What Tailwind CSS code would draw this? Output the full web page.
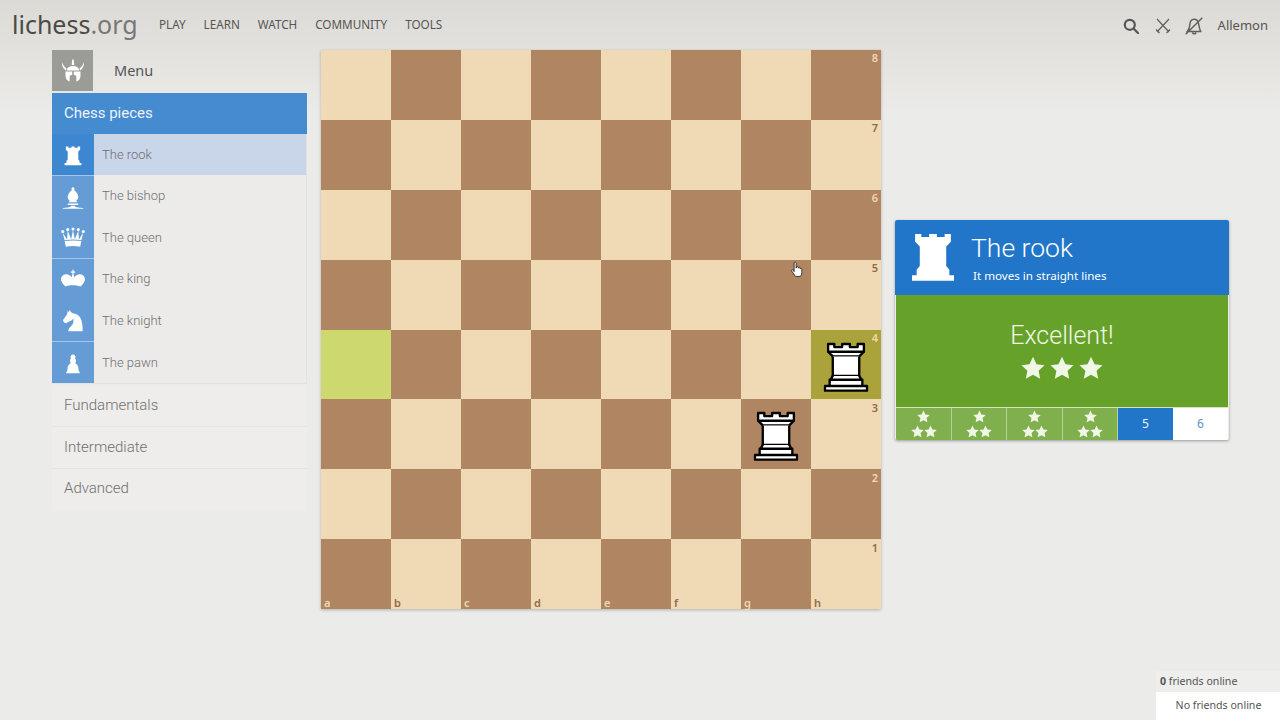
<!DOCTYPE html>
<html lang="en">
  <head>
    <meta charset="UTF-8" />
    <title>lichess.org</title>
    <script src="https://cdn.jsdelivr.net/npm/@tailwindcss/browser@4"></script>
  </head>
  <body class="relative w-[1280px] h-[720px] overflow-hidden bg-[linear-gradient(#dcdad5,#ebebe9_116px)] font-['Noto_Sans',sans-serif]">
    <svg class="hidden">
      <defs>
        <symbol id="rook-w" viewBox="0 0 45 45"><g fill="#fff" fill-rule="evenodd" stroke="#000" stroke-width="1.5" stroke-linecap="round" stroke-linejoin="round"><path d="M9 39h27v-3H9v3zM12 36v-4h21v4H12zM11 14V9h4v2h5V9h5v2h5V9h4v5" stroke-linecap="butt"/><path d="M34 14l-3 3H14l-3-3"/><path d="M31 17v12.500H14V17" stroke-linecap="butt" stroke-linejoin="miter"/><path d="M31 29.500l1.500 2.500h-20l1.500-2.500"/><path d="M11 14h23" fill="none" stroke-linejoin="miter"/></g></symbol>
        <symbol id="rook" viewBox="0 0 45 45"><path fill="#fff" d="M9 39v-3.500h3V32l2-2.500V17l-3-3V9h4v2h5V9h5v2h5V9h4v5l-3 3v12.500l2 2.500v3.500h3V39z"/></symbol>
        <symbol id="bishop" viewBox="0 0 45 45"><path fill="#fff" d="M22.500 7a2.500 2.500 0 0 1 1.700 4.300C28 14 31 19 31 23c0 2.500-1.500 4-3 5l1 3H16l1-3c-1.500-1-3-2.500-3-5 0-4 3-9 6.800-11.700A2.500 2.500 0 0 1 22.500 7zM14 33h17v2.500H14zM6 40c5 0 12-.5 14-3.500h5c2 3 9 3.500 14 3.500v1.500H6z"/></symbol>
        <symbol id="queen" viewBox="0 0 45 45"><g fill="#fff"><circle cx="6" cy="12" r="2.500"/><circle cx="14" cy="9" r="2.500"/><circle cx="22.500" cy="8" r="2.500"/><circle cx="31" cy="9" r="2.500"/><circle cx="39" cy="12" r="2.500"/><path d="M9 26c8.500-1.500 18.500-1.500 27 0l3-12-7 11-1-14-5.500 13.500L22.500 10l-3 14.500L14 11l-1 14-7-11zM9 27.500c8-1.500 19-1.500 27 0l-2 9c-7-1.500-16-1.500-23 0z"/></g></symbol>
        <symbol id="king" viewBox="0 0 45 45"><path fill="#fff" d="M21.500 6h2v3h2.500v2h-2.500v3.500c1 .5 1 2.500 0 6 1-4 6-8 12-7 5 1 7 6 6 10-1 3.500-4 7-7 9.500-7-2.500-18-2.500-24 0-3-2.500-6-6-7-9.500-1-4 1-9 6-10 6-1 11 3 12 7-1-3.500-1-5.500 0-6V11H19V9h2.500z"/></symbol>
        <symbol id="knight" viewBox="0 0 45 45"><path fill="#fff" d="M22 10c10.500 1 16.500 8 16 29H15c0-9 10-6.500 8-21 0 0-1.500 4-6 5-3 .5-3 3-5.500 3-2 0-3-1-5-3.500-.5-2.500 3-5 6-10 1.500-2.500 1-4 1-5.500l2 .5 1.500-2.500L20 9z"/></symbol>
        <symbol id="pawn" viewBox="0 0 45 45"><path fill="#fff" d="M22.500 9a4 4 0 0 0-3.200 6.400A5 5 0 0 0 17.500 19c0 1.500.7 2.800 1.800 3.700-2.300.8-5.800 4.300-5.800 10.300v1.500L11 39h23l-2.500-4.500V33c0-6-3.500-9.500-5.800-10.300a5 5 0 0 0 1.800-3.700 5 5 0 0 0-1.800-3.600A4 4 0 0 0 22.500 9z"/></symbol>
        <symbol id="star" viewBox="0 0 24 24"><path d="M12 .8l3.500 7.500 8 1-5.900 5.500 1.600 8L12 18.800l-7.200 4 1.600-8L.5 9.300l8-1z"/></symbol>
      </defs>
    </svg>

    <header class="h-[50px] flex items-center">
      <a class="ml-3 w-[147px] text-[25px] leading-none -mt-[2px] text-[#4a4a48]">lichess<span class="text-[#777]">.org</span></a>
      <nav class="flex gap-[18px] text-[11.700px] text-[#555] uppercase">
        <span>Play</span><span>Learn</span><span>Watch</span><span>Community</span><span>Tools</span>
      </nav>
      <div class="ml-auto flex items-center pr-3 text-[#555]">
        <svg class="w-[16px] h-[16px] mr-[16px] mt-[2px]" viewBox="0 0 16 16" fill="none" stroke="#555" stroke-width="2.200"><circle cx="6.800" cy="6.800" r="5"/><path d="M10.500 10.500L15 15" stroke-linecap="round"/></svg>
        <svg class="w-[16px] h-[16px] mr-[13px] mt-[2px]" viewBox="0 0 16 16" fill="none" stroke="#5f5f5d" stroke-width="1.200"><path d="M2 1l12 13M14 1L2 14M1 11.500l3.500 3.500M15 11.500L11.500 15"/></svg>
        <svg class="w-[20px] h-[20px] mr-[14px] mt-[1px]" viewBox="0 0 18 18" fill="none" stroke="#5f5f5d" stroke-width="1.300"><path d="M3 14c1.500-1.500 2-3 2.200-6C5.500 4.500 7 3 9 3s3.500 1.200 4 3.500c.5 3 1 5.500 2 7.500zM7.500 15a2 2 0 0 0 3.500 0M1.500 16.500L16.500 1.500"/></svg>
        <span class="text-[13px] mt-px">Allemon</span>
      </div>
    </header>

    <main class="flex items-start">
      <aside class="ml-[52px] w-[255px] font-['Roboto',sans-serif]">
        <div class="flex items-center h-[41px] mb-[2px]">
          <div class="w-[41px] h-[41px] bg-[#9b9b97] flex items-center justify-center">
            <svg class="w-[26px] h-[26px]" viewBox="0 0 26 26" fill="#fff"><path d="M12.300 1.500h1.400l.6 5.500h-2.600zM1.800 4c.2 3.500 1 6 3.700 8.500l1-2.300C4.500 9 3 7 1.800 4zM24.200 4c-.2 3.500-1 6-3.700 8.500l-1-2.300C21.500 9 23 7 24.200 4zM6.500 12.500C7 9.500 9.500 8 13 8s6 1.500 6.500 4.500z"/><path d="M5.500 13.500h6.700v3.300l-2.500 1v5.700C7.300 23 5.700 21 5.500 18zM13.800 13.500h6.700V18c-.2 3-1.800 5-4.200 5.500v-5.700l-2.500-1z"/></svg>
          </div>
          <span class="ml-[21px] text-[14.500px] text-[#555] font-['Noto_Sans',sans-serif]">Menu</span>
        </div>
        <div class="h-[41px] flex items-center pl-[12px] bg-[#458bd0] text-[#eef4fb] text-[15px]">Chess pieces</div>
        <div class="border-r border-b border-[#e2e2df] text-[13px] font-light text-[#707070]">
          <div class="flex h-[41px] bg-[#c9d5e8]">
            <div class="w-[42px] bg-[#3d86d0] flex items-center justify-center"><svg class="w-[28px] h-[28px]"><use href="#rook"/></svg></div>
            <span class="self-center ml-[8px]">The rook</span>
          </div>
          <div class="flex h-[42px] bg-[#ecebe9]">
            <div class="w-[42px] bg-[#659cd5] border-t border-[#a6c5e6] flex items-center justify-center"><svg class="w-[28px] h-[28px]"><use href="#bishop"/></svg></div>
            <span class="self-center ml-[8px]">The bishop</span>
          </div>
          <div class="flex h-[41px] bg-[#ecebe9]">
            <div class="w-[42px] bg-[#659cd5] flex items-center justify-center"><svg class="w-[28px] h-[28px]"><use href="#queen"/></svg></div>
            <span class="self-center ml-[8px]">The queen</span>
          </div>
          <div class="flex h-[42px] bg-[#ecebe9]">
            <div class="w-[42px] bg-[#659cd5] border-t border-[#a6c5e6] flex items-center justify-center"><svg class="w-[28px] h-[28px]"><use href="#king"/></svg></div>
            <span class="self-center ml-[8px]">The king</span>
          </div>
          <div class="flex h-[41px] bg-[#ecebe9]">
            <div class="w-[42px] bg-[#659cd5] flex items-center justify-center"><svg class="w-[28px] h-[28px]"><use href="#knight"/></svg></div>
            <span class="self-center ml-[8px]">The knight</span>
          </div>
          <div class="flex h-[42px] bg-[#ecebe9]">
            <div class="w-[42px] bg-[#659cd5] border-t border-[#a6c5e6] flex items-center justify-center"><svg class="w-[28px] h-[28px]"><use href="#pawn"/></svg></div>
            <span class="self-center ml-[8px] pt-px">The pawn</span>
          </div>
        </div>
        <div class="text-[15px] font-light text-[#707070] bg-[#eeedeb] mt-[1px] pb-[4px]">
          <div class="h-[42px] flex items-center pl-[12px] border-b border-[#e4e4e1]">Fundamentals</div>
          <div class="h-[42px] flex items-center pl-[12px] border-b border-[#e4e4e1]">Intermediate</div>
          <div class="h-[38px] flex items-center pl-[12px]">Advanced</div>
        </div>
      </aside>

      <section class="ml-[14px] w-[560px] h-[559px] grid grid-cols-8 grid-rows-[70px_70px_70px_70px_69px_70px_70px_70px] shadow-[0_1px_3px_rgba(0,0,0,0.25)] text-[11px] font-semibold">
        <div class="bg-[#f0d9b5]"></div><div class="bg-[#af8661]"></div><div class="bg-[#f0d9b5]"></div><div class="bg-[#af8661]"></div><div class="bg-[#f0d9b5]"></div><div class="bg-[#af8661]"></div><div class="bg-[#f0d9b5]"></div><div class="bg-[#af8661] text-right pr-[3px] leading-[16px] text-[#f0d9b5]">8</div>
        <div class="bg-[#af8661]"></div><div class="bg-[#f0d9b5]"></div><div class="bg-[#af8661]"></div><div class="bg-[#f0d9b5]"></div><div class="bg-[#af8661]"></div><div class="bg-[#f0d9b5]"></div><div class="bg-[#af8661]"></div><div class="bg-[#f0d9b5] text-right pr-[3px] leading-[16px] text-[#8f6c4c]">7</div>
        <div class="bg-[#f0d9b5]"></div><div class="bg-[#af8661]"></div><div class="bg-[#f0d9b5]"></div><div class="bg-[#af8661]"></div><div class="bg-[#f0d9b5]"></div><div class="bg-[#af8661]"></div><div class="bg-[#f0d9b5]"></div><div class="bg-[#af8661] text-right pr-[3px] leading-[16px] text-[#f0d9b5]">6</div>
        <div class="bg-[#af8661]"></div><div class="bg-[#f0d9b5]"></div><div class="bg-[#af8661]"></div><div class="bg-[#f0d9b5]"></div><div class="bg-[#af8661]"></div><div class="bg-[#f0d9b5]"></div><div class="bg-[#af8661]"></div><div class="bg-[#f0d9b5] text-right pr-[3px] leading-[16px] text-[#8f6c4c]">5</div>
        <div class="bg-[#cdd96f]"></div><div class="bg-[#af8661]"></div><div class="bg-[#f0d9b5]"></div><div class="bg-[#af8661]"></div><div class="bg-[#f0d9b5]"></div><div class="bg-[#af8661]"></div><div class="bg-[#f0d9b5]"></div><div class="relative bg-[#aaa23a] text-right pr-[3px] leading-[16px] text-[#f0d9b5]">4<svg class="absolute inset-0 w-[70px] h-[70px]"><use href="#rook-w"/></svg></div>
        <div class="bg-[#af8661]"></div><div class="bg-[#f0d9b5]"></div><div class="bg-[#af8661]"></div><div class="bg-[#f0d9b5]"></div><div class="bg-[#af8661]"></div><div class="bg-[#f0d9b5]"></div><div class="relative bg-[#af8661]"><svg class="absolute inset-0 w-[70px] h-[70px]"><use href="#rook-w"/></svg></div><div class="bg-[#f0d9b5] text-right pr-[3px] pt-px leading-[16px] text-[#8f6c4c]">3</div>
        <div class="bg-[#f0d9b5]"></div><div class="bg-[#af8661]"></div><div class="bg-[#f0d9b5]"></div><div class="bg-[#af8661]"></div><div class="bg-[#f0d9b5]"></div><div class="bg-[#af8661]"></div><div class="bg-[#f0d9b5]"></div><div class="bg-[#af8661] text-right pr-[3px] pt-px leading-[16px] text-[#f0d9b5]">2</div>
        <div class="relative bg-[#af8661] text-[#f0d9b5]"><span class="absolute left-[3px] bottom-0 leading-[12px]">a</span></div>
        <div class="relative bg-[#f0d9b5] text-[#8f6c4c]"><span class="absolute left-[3px] bottom-0 leading-[12px]">b</span></div>
        <div class="relative bg-[#af8661] text-[#f0d9b5]"><span class="absolute left-[3px] bottom-0 leading-[12px]">c</span></div>
        <div class="relative bg-[#f0d9b5] text-[#8f6c4c]"><span class="absolute left-[3px] bottom-0 leading-[12px]">d</span></div>
        <div class="relative bg-[#af8661] text-[#f0d9b5]"><span class="absolute left-[3px] bottom-0 leading-[12px]">e</span></div>
        <div class="relative bg-[#f0d9b5] text-[#8f6c4c]"><span class="absolute left-[3px] bottom-0 leading-[12px]">f</span></div>
        <div class="relative bg-[#af8661] text-[#f0d9b5]"><span class="absolute left-[3px] bottom-0 leading-[12px]">g</span></div>
        <div class="relative bg-[#f0d9b5] text-[#8f6c4c] text-right pr-[3px] pt-px leading-[16px]">1<span class="absolute left-[3px] bottom-0 leading-[12px]">h</span></div>
      </section>

      <section class="ml-[14px] mt-[170px] w-[334px] rounded-[2px] shadow-[0_1px_3px_rgba(0,0,0,0.35)] overflow-hidden font-['Roboto',sans-serif]">
        <div class="h-[75px] bg-[#2176c9] flex text-white">
          <svg class="w-[70px] h-[70px] ml-[3px] shrink-0"><use href="#rook"/></svg>
          <div class="ml-[3px]">
            <div class="text-[26.500px] font-light leading-[32px] mt-[12px]">The rook</div>
            <div class="text-[11.600px] leading-[16px] mt-[4px] ml-[2px] font-['Noto_Sans',sans-serif]">It moves in straight lines</div>
          </div>
        </div>
        <div class="h-[112px] mx-px bg-[#66a22a] flex flex-col items-center text-[#f1f7e6]">
          <div class="text-[25px] font-light leading-[30px] mt-[26px]">Excellent!</div>
          <div class="flex gap-[5px] mt-[5px]">
            <svg class="w-[24px] h-[24px]" fill="#f1f7e6"><use href="#star"/></svg>
            <svg class="w-[24px] h-[24px]" fill="#f1f7e6"><use href="#star"/></svg>
            <svg class="w-[24px] h-[24px]" fill="#f1f7e6"><use href="#star"/></svg>
          </div>
        </div>
        <div class="h-[33px] mx-px flex bg-white border-t border-[#d5e5c3] text-[12px] font-['Noto_Sans',sans-serif]">
          <div class="w-[56px] bg-[#80b04e] border-r border-[#b5d19a] flex flex-col items-center justify-center"><svg class="w-[13px] h-[13px]" fill="#f1f7e6"><use href="#star"/></svg><div class="flex mt-[2px]"><svg class="w-[13px] h-[13px]" fill="#f1f7e6"><use href="#star"/></svg><svg class="w-[13px] h-[13px]" fill="#f1f7e6"><use href="#star"/></svg></div></div>
          <div class="w-[55px] bg-[#80b04e] border-r border-[#b5d19a] flex flex-col items-center justify-center"><svg class="w-[13px] h-[13px]" fill="#f1f7e6"><use href="#star"/></svg><div class="flex mt-[2px]"><svg class="w-[13px] h-[13px]" fill="#f1f7e6"><use href="#star"/></svg><svg class="w-[13px] h-[13px]" fill="#f1f7e6"><use href="#star"/></svg></div></div>
          <div class="w-[56px] bg-[#80b04e] border-r border-[#b5d19a] flex flex-col items-center justify-center"><svg class="w-[13px] h-[13px]" fill="#f1f7e6"><use href="#star"/></svg><div class="flex mt-[2px]"><svg class="w-[13px] h-[13px]" fill="#f1f7e6"><use href="#star"/></svg><svg class="w-[13px] h-[13px]" fill="#f1f7e6"><use href="#star"/></svg></div></div>
          <div class="w-[55px] bg-[#80b04e] border-r border-[#b5d19a] flex flex-col items-center justify-center"><svg class="w-[13px] h-[13px]" fill="#f1f7e6"><use href="#star"/></svg><div class="flex mt-[2px]"><svg class="w-[13px] h-[13px]" fill="#f1f7e6"><use href="#star"/></svg><svg class="w-[13px] h-[13px]" fill="#f1f7e6"><use href="#star"/></svg></div></div>
          <div class="w-[55px] bg-[#2176c9] text-[#eaf2fb] flex items-center justify-center">5</div>
          <div class="flex-1 text-[#5b8fc4] flex items-center justify-center">6</div>
        </div>
      </section>
    </main>

    <svg class="absolute left-[790px] top-[261px] w-[14px] h-[17px]" viewBox="0 0 13 16" fill="#fff" stroke="#222" stroke-width="0.800"><path d="M3.800 1.500c.8-.8 1.900-.3 1.900.7v4.500l.4-1.200c.6-.6 1.400-.4 1.500.4l.1.800.2-.6c.6-.5 1.300-.3 1.400.5l.1.700.3-.3c.6-.4 1.300-.1 1.300.8V11c0 1.500-.6 2.500-1.200 3.500H5L1.500 9.500c-.5-1 .5-1.700 1.300-1L3.800 10z"/></svg>

    <aside class="absolute left-[1156px] top-[671px] w-[124px] h-[49px] text-[10.600px] text-[#555] bg-white">
      <div class="h-[21px] leading-[20px] pl-[4px] bg-[#eeeeec]"><b>0</b> friends online</div>
      <div class="h-[28px] leading-[27px] pl-[1px] text-center">No friends online</div>
    </aside>
  </body>
</html>
